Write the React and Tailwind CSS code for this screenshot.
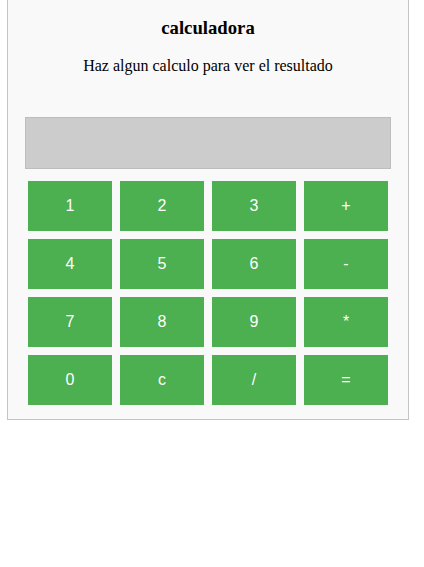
import React, { useState } from 'react';

const keys = ['1', '2', '3', '+', '4', '5', '6', '-', '7', '8', '9', '*', '0', 'c', '/', '='];

const App = () => {
  const [display, setDisplay] = useState('');

  const press = (k) => {
    if (k === 'c') return setDisplay('');
    if (k === '=') {
      try {
        // eslint-disable-next-line no-new-func
        setDisplay(String(Function(`return (${display})`)()));
      } catch {
        setDisplay('Error');
      }
      return;
    }
    setDisplay((d) => d + k);
  };

  return (
    <div className="w-[424px] h-[567px] bg-white" style={{ fontFamily: '"Liberation Serif", serif' }}>
      <div className="ml-[7px] w-[402px] bg-[#f9f9f9] border border-t-0 border-[#c4c4c4] pt-[17px] pb-[14px]">
        <h3 className="text-center font-bold text-[18.72px] leading-[22px] h-[22px] text-black">calculadora</h3>
        <p className="mt-[18px] text-center text-[16px] leading-[18px] h-[18px] text-black">Haz algun calculo para ver el resultado</p>
        <div className="mt-[42px] ml-[17px] w-[366px] h-[52px] bg-[#cccccc] border border-[#bdbdbd] flex items-center justify-end px-3 text-[20px]" style={{ fontFamily: '"Liberation Sans", Arial, sans-serif' }}>
          {display}
        </div>
        <div className="mt-[12px] ml-[20px] grid grid-cols-[repeat(4,84px)] gap-[8px]" style={{ fontFamily: '"Liberation Sans", Arial, sans-serif' }}>
          {keys.map((k) => (
            <button key={k} onClick={() => press(k)} className="h-[50px] bg-[#4caf50] text-white text-[16px] flex items-center justify-center">
              {k}
            </button>
          ))}
        </div>
      </div>
    </div>
  );
};

export default App;
